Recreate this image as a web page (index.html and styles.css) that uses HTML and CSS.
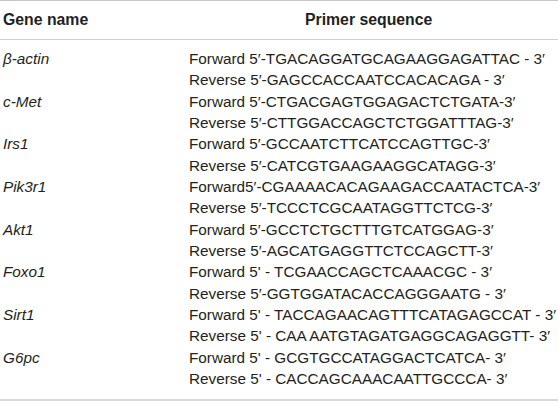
FILE: index.html
```html
<!DOCTYPE html>
<html>
<head>
<meta charset="utf-8">
<link rel="stylesheet" href="styles.css">
</head>
<body>
<table class="primers">
  <thead>
    <tr><th class="gene-col">Gene name</th><th class="seq-col">Primer sequence</th></tr>
  </thead>
  <tbody>
    <tr><td class="gene">β-actin</td><td class="seq"><div>Forward 5′-TGACAGGATGCAGAAGGAGATTAC - 3′</div><div>Reverse 5′-GAGCCACCAATCCACACAGA - 3′</div></td></tr>
    <tr><td class="gene">c-Met</td><td class="seq"><div>Forward 5′-CTGACGAGTGGAGACTCTGATA-3′</div><div>Reverse 5′-CTTGGACCAGCTCTGGATTTAG-3′</div></td></tr>
    <tr><td class="gene">Irs1</td><td class="seq"><div>Forward 5′-GCCAATCTTCATCCAGTTGC-3′</div><div>Reverse 5′-CATCGTGAAGAAGGCATAGG-3′</div></td></tr>
    <tr><td class="gene">Pik3r1</td><td class="seq"><div>Forward5′-CGAAAACACAGAAGACCAATACTCA-3′</div><div>Reverse 5′-TCCCTCGCAATAGGTTCTCG-3′</div></td></tr>
    <tr><td class="gene">Akt1</td><td class="seq"><div>Forward 5′-GCCTCTGCTTTGTCATGGAG-3′</div><div>Reverse 5′-AGCATGAGGTTCTCCAGCTT-3′</div></td></tr>
    <tr><td class="gene">Foxo1</td><td class="seq"><div>Forward 5' - TCGAACCAGCTCAAACGC - 3′</div><div>Reverse 5′-GGTGGATACACCAGGGAATG - 3′</div></td></tr>
    <tr><td class="gene">Sirt1</td><td class="seq"><div>Forward 5' - TACCAGAACAGTTTCATAGAGCCAT - 3′</div><div>Reverse 5' - CAA AATGTAGATGAGGCAGAGGTT- 3′</div></td></tr>
    <tr><td class="gene">G6pc</td><td class="seq"><div>Forward 5' - GCGTGCCATAGGACTCATCA- 3′</div><div>Reverse 5' - CACCAGCAAACAATTGCCCA- 3′</div></td></tr>
  </tbody>
</table>
</body>
</html>
```
FILE: styles.css
```css
html, body {
  margin: 0;
  padding: 0;
  background: #fff;
}
.primers {
  width: 558px;
  border-collapse: collapse;
  font-family: "Liberation Sans", Arial, sans-serif;
  color: #231f20;
  border-top: 1px solid #c8c8c8;
  border-bottom: 2px solid #d9d9d9;
}
.primers th {
  font-weight: bold;
  font-size: 15.8px;
  height: 38px;
  padding: 0;
  border-bottom: 1px solid #cfcfcf;
  vertical-align: middle;
}
.gene-col {
  text-align: left;
  width: 186px;
  padding-left: 3px !important;
}
.seq-col {
  text-align: left;
  padding-left: 116px !important;
}
.primers td {
  font-size: 15.3px;
  line-height: 21.35px;
  padding: 0;
  vertical-align: top;
}
.primers tbody tr:first-child td {
  padding-top: 8px;
}
.primers tbody tr:last-child td {
  padding-bottom: 9px;
}
.gene {
  font-style: italic;
  padding-left: 3px !important;
}
.seq {
  white-space: nowrap;
}
```
